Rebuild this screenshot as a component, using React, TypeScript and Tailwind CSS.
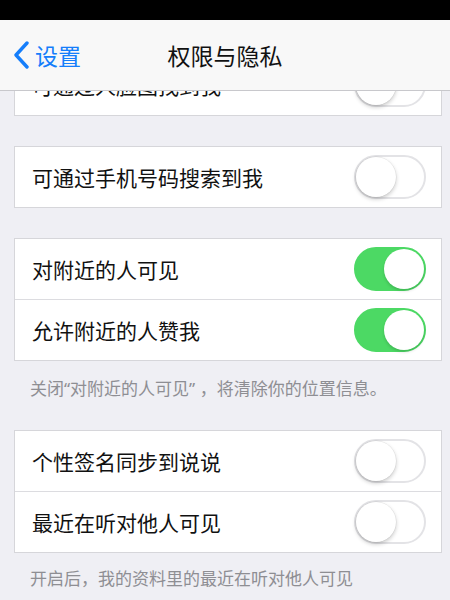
import { useState } from 'react'

interface RowProps {
  label: string
  on: boolean
  onToggle: () => void
  last?: boolean
}

function Toggle({ on, onToggle }: { on: boolean; onToggle: () => void }) {
  return (
    <button
      onClick={onToggle}
      className={
        on
          ? 'relative h-[44px] w-[72px] shrink-0 rounded-full bg-[#4cd964] border-2 border-[#4cd964]'
          : 'relative h-[44px] w-[72px] shrink-0 rounded-full bg-white border-2 border-[#e3e3e6]'
      }
    >
      <span
        className={
          on
            ? 'absolute top-0 right-0 h-[40px] w-[40px] rounded-full bg-white shadow-[0_2px_3px_rgba(0,0,0,0.15)]'
            : 'absolute top-0 left-0 h-[40px] w-[40px] rounded-full bg-white shadow-[0_2px_4px_rgba(0,0,0,0.22),0_0_0_0.5px_rgba(0,0,0,0.08)]'
        }
      />
    </button>
  )
}

function Row({ label, on, onToggle, last }: RowProps) {
  return (
    <div
      className={
        last
          ? 'flex h-[60px] items-center justify-between pl-[17px] pr-[15px]'
          : 'flex h-[61px] items-center justify-between pl-[17px] pr-[15px] border-b border-[#dcdce0]'
      }
    >
      <span className="text-[21px] text-[#111] leading-none">{label}</span>
      <Toggle on={on} onToggle={onToggle} />
    </div>
  )
}

function Card({ children }: { children: React.ReactNode }) {
  return (
    <div className="ml-[14px] w-[428px] bg-white border border-[#d6d6da]">{children}</div>
  )
}

const footerFont = { fontFamily: '"Noto Sans", "Noto Sans CJK SC", sans-serif' }

export default function App() {
  const [state, setState] = useState({
    face: false,
    phone: false,
    nearby: true,
    like: true,
    sign: false,
    music: false,
  })
  const flip = (k: keyof typeof state) => setState((s) => ({ ...s, [k]: !s[k] }))

  return (
    <div
      className="flex h-[600px] w-[450px] flex-col overflow-hidden bg-[#efeff4]"
      style={{ fontFamily: '"Noto Sans CJK SC", "Noto Sans", sans-serif' }}
    >
      <div className="h-[20px] shrink-0 bg-black" />
      <div className="relative z-10 flex h-[71px] shrink-0 items-center border-b border-[#c8c8cc] bg-[#f8f8f8]">
        <button className="flex items-center pl-[13px] text-[#157efb]">
          <svg width="17" height="28" viewBox="0 0 17 28" fill="none">
            <path d="M14 2 L3 14 L14 26" stroke="#157efb" strokeWidth="3.4" strokeLinecap="round" strokeLinejoin="round" />
          </svg>
          <span className="ml-[5px] text-[23px] leading-none">设置</span>
        </button>
        <div className="absolute left-0 right-0 text-center text-[23px] text-[#111] leading-none pointer-events-none">
          权限与隐私
        </div>
      </div>
      <div className="flex-1 overflow-hidden">
        <div className="-mt-[37px]">
          <Card>
            <Row label="可通过人脸图找到我" on={state.face} onToggle={() => flip('face')} last />
          </Card>
          <div className="h-[30px]" />
          <Card>
            <Row label="可通过手机号码搜索到我" on={state.phone} onToggle={() => flip('phone')} last />
          </Card>
          <div className="h-[30px]" />
          <Card>
            <Row label="对附近的人可见" on={state.nearby} onToggle={() => flip('nearby')} />
            <Row label="允许附近的人赞我" on={state.like} onToggle={() => flip('like')} last />
          </Card>
          <div
            className="h-[69px] pl-[30px] pt-[16px] text-[17px] leading-[24px] text-[#8e8e93]"
            style={footerFont}
          >
            关闭“对附近的人可见” ，将清除你的位置信息。
          </div>
          <Card>
            <Row label="个性签名同步到说说" on={state.sign} onToggle={() => flip('sign')} />
            <Row label="最近在听对他人可见" on={state.music} onToggle={() => flip('music')} last />
          </Card>
          <div className="pl-[30px] pt-[14px] text-[17px] leading-[24px] text-[#8e8e93]" style={footerFont}>
            开启后，我的资料里的最近在听对他人可见
          </div>
        </div>
      </div>
    </div>
  )
}
